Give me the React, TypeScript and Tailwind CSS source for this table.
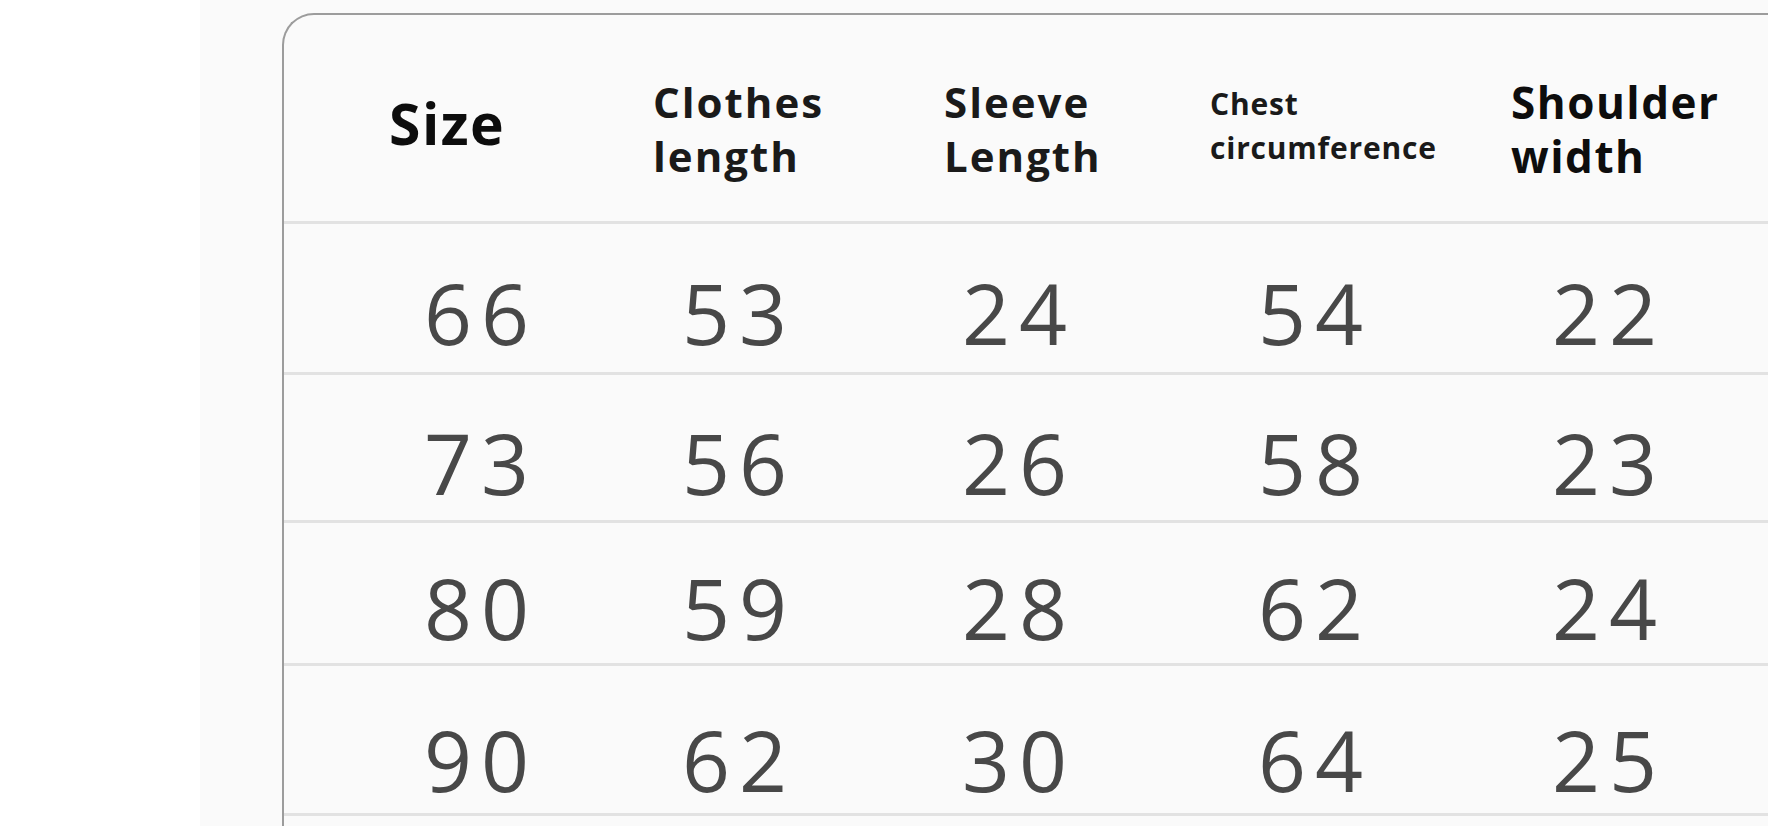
import React from "react"

const headFont = { fontFamily: '"Open Sans", "Noto Sans", sans-serif' }
const numFont = { fontFamily: '"Open Sans", "Noto Sans", sans-serif' }

const columns = [
  { key: "size", head: "pl-[105px]", num: "pl-[140px]" },
  { key: "clothes", head: "pl-[53px]", num: "pl-[82px]" },
  { key: "sleeve", head: "pl-[64px]", num: "pl-[82px]" },
  { key: "chest", head: "pl-[50px]", num: "pl-[98px]" },
  { key: "shoulder", head: "pl-[51px]", num: "pl-[92px]" },
]

const rows = [
  { h: "h-[151px]", pad: "pt-[30px]", values: ["66", "53", "24", "54", "22"] },
  { h: "h-[148px]", pad: "pt-[30px]", values: ["73", "56", "26", "58", "23"] },
  { h: "h-[143px]", pad: "pt-[30px]", values: ["80", "59", "28", "62", "24"] },
  { h: "h-[150px]", pad: "pt-[40px]", values: ["90", "62", "30", "64", "25"] },
]

const gridCols = "grid grid-cols-[316px_280px_280px_300px_1fr]"

function HeaderRow() {
  return (
    <div className={`${gridCols} h-[209px] border-b-[3px] border-[#e2e2e2]`} style={headFont}>
      <div className={`flex items-center ${columns[0].head} pt-[12px]`}>
        <span className="text-[57px] font-bold text-[#0d0d0d] tracking-[1.5px]">Size</span>
      </div>
      <div className={`flex items-center ${columns[1].head} pt-[22px]`}>
        <span className="text-[42px] leading-[54px] font-bold text-[#1a1a1a] tracking-[2px]">
          Clothes
          <br />
          length
        </span>
      </div>
      <div className={`flex items-center ${columns[2].head} pt-[22px]`}>
        <span className="text-[42px] leading-[54px] font-bold text-[#1a1a1a] tracking-[2px]">
          Sleeve
          <br />
          Length
        </span>
      </div>
      <div className={`flex items-center ${columns[3].head} pt-[16px]`}>
        <span className="text-[30px] leading-[44px] font-bold text-[#1a1a1a] tracking-[0.8px]">
          Chest
          <br />
          circumference
        </span>
      </div>
      <div className={`flex items-center ${columns[4].head} pt-[22px]`}>
        <span className="text-[44px] leading-[54px] font-bold text-[#0d0d0d] tracking-[1.5px]">
          Shoulder
          <br />
          width
        </span>
      </div>
    </div>
  )
}

export default function App() {
  return (
    <div className="flex h-[826px] w-full overflow-hidden bg-white">
      <div className="w-[200px] shrink-0 bg-white" />
      <div className="flex-1 overflow-hidden bg-[#fafafa] pl-[82px] pt-[13px]">
        <div className="w-[1600px] h-[900px] rounded-tl-[32px] border-l-2 border-t-2 border-[#9c9c9c] bg-[#fafafa]">
          <HeaderRow />
          {rows.map((row, i) => (
            <div key={i} className={`${gridCols} ${row.h} border-b-[3px] border-[#e2e2e2]`}>
              {row.values.map((v, j) => (
                <div key={j} className={`flex items-center ${columns[j].num} ${row.pad}`}>
                  <span className="text-[84px] leading-none text-[#484848] tracking-[9px]" style={numFont}>
                    {v}
                  </span>
                </div>
              ))}
            </div>
          ))}
        </div>
      </div>
    </div>
  )
}
